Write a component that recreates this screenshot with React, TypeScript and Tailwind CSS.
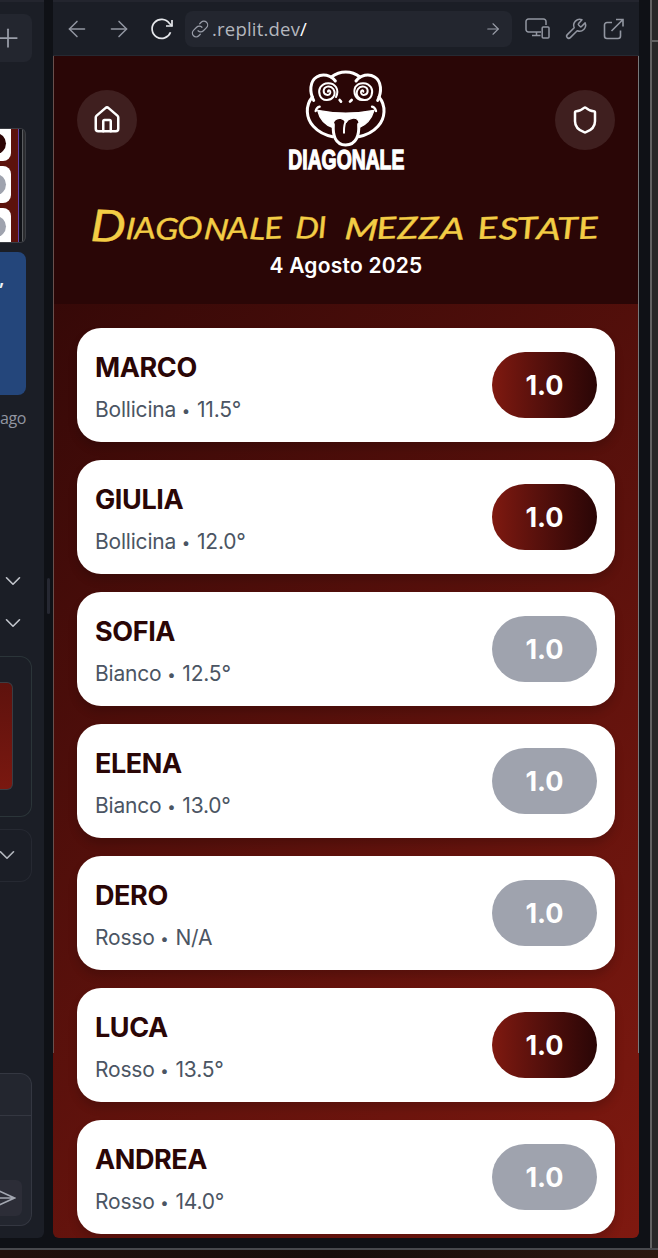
import React from "react";
import { ArrowLeft, ArrowRight, ChevronDown, House, Plus, Shield } from "lucide-react";

type Wine = { name: string; kind: string; degree: string; voted: boolean };

const wines: Wine[] = [
  { name: "MARCO", kind: "Bollicina", degree: "11.5°", voted: true },
  { name: "GIULIA", kind: "Bollicina", degree: "12.0°", voted: true },
  { name: "SOFIA", kind: "Bianco", degree: "12.5°", voted: false },
  { name: "ELENA", kind: "Bianco", degree: "13.0°", voted: false },
  { name: "DERO", kind: "Rosso", degree: "N/A", voted: false },
  { name: "LUCA", kind: "Rosso", degree: "13.5°", voted: true },
  { name: "ANDREA", kind: "Rosso", degree: "14.0°", voted: false },
];

function FrogLogo() {
  return (
    <svg className="overflow-visible" width="150" height="125" viewBox="0 0 450 375" fill="none" stroke="#fff" strokeWidth="9" strokeLinecap="round" strokeLinejoin="round">
      <path d="M184 66C210 46 245 46 270 66" />
      <path d="M196 78C182 60 158 54 140 66C119 79 118 111 131 136" />
      <path d="M258 78C272 60 296 54 314 66C335 79 336 111 323 136" />
      <path d="M127 126C105 152 108 190 130 214C147 233 166 241 188 245" />
      <path d="M327 126C349 152 346 190 324 214C307 233 288 241 266 245" />
      <path strokeWidth="6" d="M174 110C174 103 182 106 181 113C179 124 161 121 161 108C161 94 181 89 190 102C201 120 186 136 169 135C149 134 143 111 151 97C161 81 187 80 198 96C205 108 202 118 198 126" />
      <path strokeWidth="6" d="M280 110C280 103 272 106 273 113C275 124 293 121 293 108C293 94 273 89 264 102C253 120 268 136 285 135C305 134 311 111 303 97C293 81 267 80 256 96C248 115 258 134 276 135" />
      <path strokeWidth="8" d="M209 135L213 140M245 135L240 140" />
      <path fill="#fff" strokeWidth="4" d="M143 166C198 177 256 177 312 166C304 193 287 210 267 218C271 194 259 187 246 190C236 192 231 196 228 202C221 189 204 186 195 195C189 201 188 210 189 218C166 210 149 192 143 166Z" />
      <path strokeWidth="7" d="M137 168C139 160 144 156 149 155M318 168C316 160 311 156 306 155" />
      <path d="M190 208C188 240 195 269 227 270C260 269 268 240 266 208" />
      <path strokeWidth="6" d="M228 198C221 209 222 221 222 233" />
      <text x="55" y="343" fill="#fff" strokeWidth="4" strokeLinejoin="miter" fontFamily="Liberation Sans Narrow, Liberation Sans, sans-serif" fontWeight="700" fontSize="84" textLength="348" lengthAdjust="spacingAndGlyphs">DIAGONALE</text>
    </svg>
  );
}

function Reload() {
  return (
    <svg width="24" height="24" viewBox="0 0 24 24" fill="none" stroke="#e5e7eb" strokeWidth="1.7">
      <path d="M20.500 15.200A9.500 9.500 0 1 1 19.300 6.300L22 9" />
      <path d="M22 3v6h-6" />
    </svg>
  );
}

function LinkIcon() {
  return (
    <svg width="18" height="18" viewBox="0 0 24 24" fill="none" stroke="#9a9ea9" strokeWidth="1.6" strokeLinecap="round">
      <path d="M9.400 14.300a5 5 0 0 0 7.100 0l4.200-4.200A5 5 0 0 0 13.600 3l-2 2" />
      <path d="M14.600 9.700a5 5 0 0 0-7.100 0l-4.200 4.200a5 5 0 0 0 7.100 7.100l2-2" />
    </svg>
  );
}

function Devices() {
  return (
    <svg width="26" height="22" viewBox="0 0 26 22" fill="none" stroke="#9296a1" strokeWidth="1.5">
      <path d="M16 14H3.500A2.500 2.500 0 0 1 1 11.500V3.500A2.500 2.500 0 0 1 3.500 1H18.500A2.500 2.500 0 0 1 21 3.500V7M11.500 14v3.500M7 17.500h8.500" />
      <rect x="17.200" y="9" width="6.800" height="11" rx="1" />
    </svg>
  );
}

function Wrench() {
  return (
    <svg width="24" height="24" viewBox="0 0 24 24" fill="none" stroke="#9296a1" strokeWidth="1.5" strokeLinejoin="round">
      <path d="M14.600 6.600a1 1 0 0 0 0 1.400l1.500 1.500a1 1 0 0 0 1.400 0l3.600-3.600a6 6 0 0 1-7.900 7.800L6.300 20.600a2.100 2.100 0 0 1-3-3l6.900-6.900A6 6 0 0 1 18 2.800z" />
    </svg>
  );
}

function ExternalIcon() {
  return (
    <svg width="22" height="22" viewBox="0 0 22 22" fill="none" stroke="#9296a1" strokeWidth="1.600">
      <path d="M13 1.500h7v7M20 1.500L8.500 13M9 4.500H4A2.500 2.500 0 0 0 1.500 7v11A2.500 2.500 0 0 0 4 20.500h11a2.500 2.500 0 0 0 2.500-2.500v-5.500" />
    </svg>
  );
}

function ChatPanel() {
  return (
    <aside className="flex h-[1238px] w-11 shrink-0 flex-col overflow-hidden rounded-br-md border-t-2 border-[#23252e] bg-[#1b1e26]">
      <div className="mt-3 flex h-12 w-8 shrink-0 items-center overflow-hidden rounded-r-lg bg-[#23262f]">
        <Plus className="-ml-[7px] h-[30px] w-[30px] shrink-0 text-[#9a9ea9]" strokeWidth={1.4} />
      </div>
      <div className="mt-[66px] flex h-[115px] w-[26px] shrink-0 overflow-hidden rounded-r-md border-y border-r border-[#3b3d43] bg-[#2b2c2f]">
        <div className="flex w-[18px] shrink-0 flex-col gap-[5px] bg-[#5c120c]">
          <div className="flex h-8 w-[11px] shrink-0 items-center overflow-hidden rounded-br-lg bg-white"><span className="-ml-[15px] -mt-1 h-[21px] w-[21px] shrink-0 rounded-full bg-[#2d0606]" /></div>
          <div className="flex h-[37px] w-[11px] shrink-0 items-center overflow-hidden rounded-r-lg bg-white"><span className="-ml-[15px] h-[21px] w-[21px] shrink-0 rounded-full bg-[#9fa3ae]" /></div>
          <div className="flex h-[37px] w-[11px] shrink-0 items-center overflow-hidden rounded-tr-lg bg-white"><span className="-ml-[15px] h-[21px] w-[21px] shrink-0 rounded-full bg-[#9fa3ae]" /></div>
        </div>
        <div className="w-px bg-[#6543a8]" />
        <div className="w-[3px] bg-[#0f1116]" />
        <div className="w-px bg-[#5b5d60]" />
      </div>
      <div className="mt-[9px] h-[143px] w-[26px] shrink-0 rounded-br-lg rounded-tr-lg bg-[#24467b] pt-[14px] font-['Open_Sans',sans-serif] text-[20px] font-semibold leading-6 text-[#eef1f5]">
        <span className="-ml-px">,</span>
      </div>
      <div className="mt-[11px] h-6 w-[26px] shrink-0 font-['Open_Sans',sans-serif] text-[16px] leading-6 tracking-[-0.4px] text-[#9296a1]">ago</div>
      <ChevronDown className="mt-[138px] h-[26px] w-[26px] shrink-0 text-[#c2c5cc]" strokeWidth={1.5} />
      <ChevronDown className="mt-4 h-[26px] w-[26px] shrink-0 text-[#c2c5cc]" strokeWidth={1.5} />
      <div className="mt-5 flex h-[161px] w-8 shrink-0 items-start rounded-r-xl border-y border-r border-[#2b3539] pt-[25px]">
        <div className="h-[108px] w-[13px] rounded-r-md border-y border-r border-[#3b3d43] bg-linear-to-b from-[#5e120d] to-[#7a1810]" />
      </div>
      <div className="mt-3 flex h-[53px] w-8 shrink-0 items-center rounded-r-xl border-y border-r border-[#262932]">
        <ChevronDown className="-ml-[6px] -mt-px h-[26px] w-[26px] shrink-0 text-[#b4b7be]" strokeWidth={1.5} />
      </div>
      <div className="mt-[191px] flex h-[153px] w-8 shrink-0 flex-col overflow-hidden rounded-r-xl border-y border-r border-[#343741] bg-[#23262f]">
        <div className="h-[42px] border-b border-[#343741]" />
        <div className="mt-16 flex h-9 w-[22px] items-center rounded-r-md bg-[#2c2d37]">
          <svg width="16" height="18" viewBox="0 0 16 18" fill="none" stroke="#a3a7b1" strokeWidth="1.500"><path d="M-4 0.500L14.500 9L-4 17.500M-2 9H14" /></svg>
        </div>
      </div>
    </aside>
  );
}

function BrowserBar() {
  return (
    <div className="flex h-14 shrink-0 items-center border-b border-t-2 border-b-[#262932] border-t-[#23252e] bg-[#1b1e26] pl-[11px]">
      <ArrowLeft className="h-[26px] w-[26px] text-[#9296a1]" strokeWidth={1.4} />
      <ArrowRight className="ml-4 h-[26px] w-[26px] text-[#9296a1]" strokeWidth={1.4} />
      <span className="ml-[18px]"><Reload /></span>
      <div className="ml-[11px] flex h-9 w-[327px] shrink-0 items-center rounded-lg bg-[#23262f] pl-[6px]">
        <LinkIcon />
        <span className="ml-[3px] whitespace-pre font-['Open_Sans',sans-serif] text-[18.5px] leading-6 tracking-[0.2px] text-[#b4b7be]">.replit.dev<span className="text-white">/</span></span>
        <ArrowRight className="ml-auto mr-[10px] h-[18px] w-[18px] text-[#9a9ea9]" strokeWidth={1.5} />
      </div>
      <span className="ml-[13px]"><Devices /></span>
      <span className="ml-[13px]"><Wrench /></span>
      <span className="ml-[15px]"><ExternalIcon /></span>
    </div>
  );
}

function WineCard({ wine }: { wine: Wine }) {
  return (
    <li className="flex h-[114px] shrink-0 items-center justify-between rounded-[24px] bg-white px-[18px] shadow-[0_6px_10px_rgba(0,0,0,0.16)]">
      <div className="pt-[2px]">
        <h2 className="text-[27px] font-bold leading-[42px] tracking-[-0.4px] text-[#2a0606]">{wine.name}</h2>
        <p className="mt-[6px] text-[21px] leading-[30px] tracking-[-0.2px] text-[#4b5563]">{wine.kind} <span className="inline-block w-[9.5px] align-[1px] text-[15px] leading-none">•</span> {wine.degree}</p>
      </div>
      <span className={`flex h-[66px] w-[105px] items-center justify-center rounded-full pt-[2px] text-[27px] font-bold text-white ${wine.voted ? "bg-linear-to-r from-[#7f1910] to-[#2a0606]" : "bg-[#9fa3ae]"}`}>1.0</span>
    </li>
  );
}

export default function App() {
  return (
    <div className="flex h-[1258px] w-[658px] flex-col overflow-hidden bg-[#0f1116] font-['Inter',sans-serif]">
      <div className="flex h-[1250px] shrink-0 border-b-2 border-[#48494d]">
        <ChatPanel />
        <div className="flex h-[1238px] w-[9px] shrink-0 pl-[3px] pt-[578px]">
          <div className="h-9 w-[3px] rounded-full bg-[#262832]" />
        </div>
        <main className="flex h-[1238px] w-[586px] shrink-0 flex-col overflow-hidden rounded-b-md">
          <BrowserBar />
          <div className="relative flex h-[1182px] flex-col bg-linear-[135deg] from-[#2a0606] to-[#7f1910]">
            <header className="flex h-[248px] shrink-0 flex-col bg-[#2a0606]">
              <div className="flex h-[124px] items-start justify-between px-6">
                <button className="mt-[34px] flex h-[60px] w-[60px] items-center justify-center rounded-full bg-[#3f1f1f] text-white">
                  <House className="h-[30px] w-[30px]" />
                </button>
                <div className="-mt-px mr-[2px]"><FrogLogo /></div>
                <button className="mt-[34px] flex h-[60px] w-[60px] items-center justify-center rounded-full bg-[#3f1f1f] text-white">
                  <Shield className="h-[30px] w-[30px]" />
                </button>
              </div>
              <h1 className="mt-[21px] flex h-[50px] items-center pl-[37px] text-[#f3cd45]">
                <svg className="overflow-visible" width="514" height="50" viewBox="0 0 514 50" fill="currentColor" stroke="currentColor" strokeWidth="0.4" strokeLinejoin="round" fontFamily="Lato, sans-serif" fontStyle="italic" fontSize="30" aria-label="Diagonale di mezza estate">
                  <text x="0" y="40" textLength="193" lengthAdjust="spacingAndGlyphs" rotate="2 4 -2 3 -3 5 -2 4 -3"><tspan fontSize="44">D</tspan><tspan dy="-2">IAGONALE</tspan></text>
                  <text x="205" y="37" textLength="32" lengthAdjust="spacingAndGlyphs" rotate="3 -2">DI</text>
                  <text x="254" y="38" textLength="120" lengthAdjust="spacingAndGlyphs" rotate="4 -3 -3 -3 2">MEZZA</text>
                  <text x="388" y="38" textLength="121" lengthAdjust="spacingAndGlyphs" rotate="-3 2 -3 3 -2 -3">ESTATE</text>
                </svg>
              </h1>
              <p className="text-center text-[21px] font-semibold leading-[30px] tracking-[0.22px] text-white">4 Agosto 2025</p>
            </header>
            <ul className="flex flex-col gap-[18px] px-6 pt-6">
              {wines.map((wine) => <WineCard key={wine.name} wine={wine} />)}
            </ul>
            <div className="pointer-events-none absolute inset-x-0 top-0 h-[997px] border-x border-l-[#69504d] border-r-[#77787a]" />
          </div>
        </main>
        <div className="w-[11px] shrink-0" />
        <div className="w-[2px] shrink-0 bg-[#626262]" />
        <div className="w-[6px] shrink-0 bg-[#282828] pt-10"><div className="h-[2px] bg-[#626262]" /></div>
      </div>
      <div className="h-2 bg-linear-to-r from-[#21100d] via-[#160d0b] to-[#2c170f]" />
    </div>
  );
}
